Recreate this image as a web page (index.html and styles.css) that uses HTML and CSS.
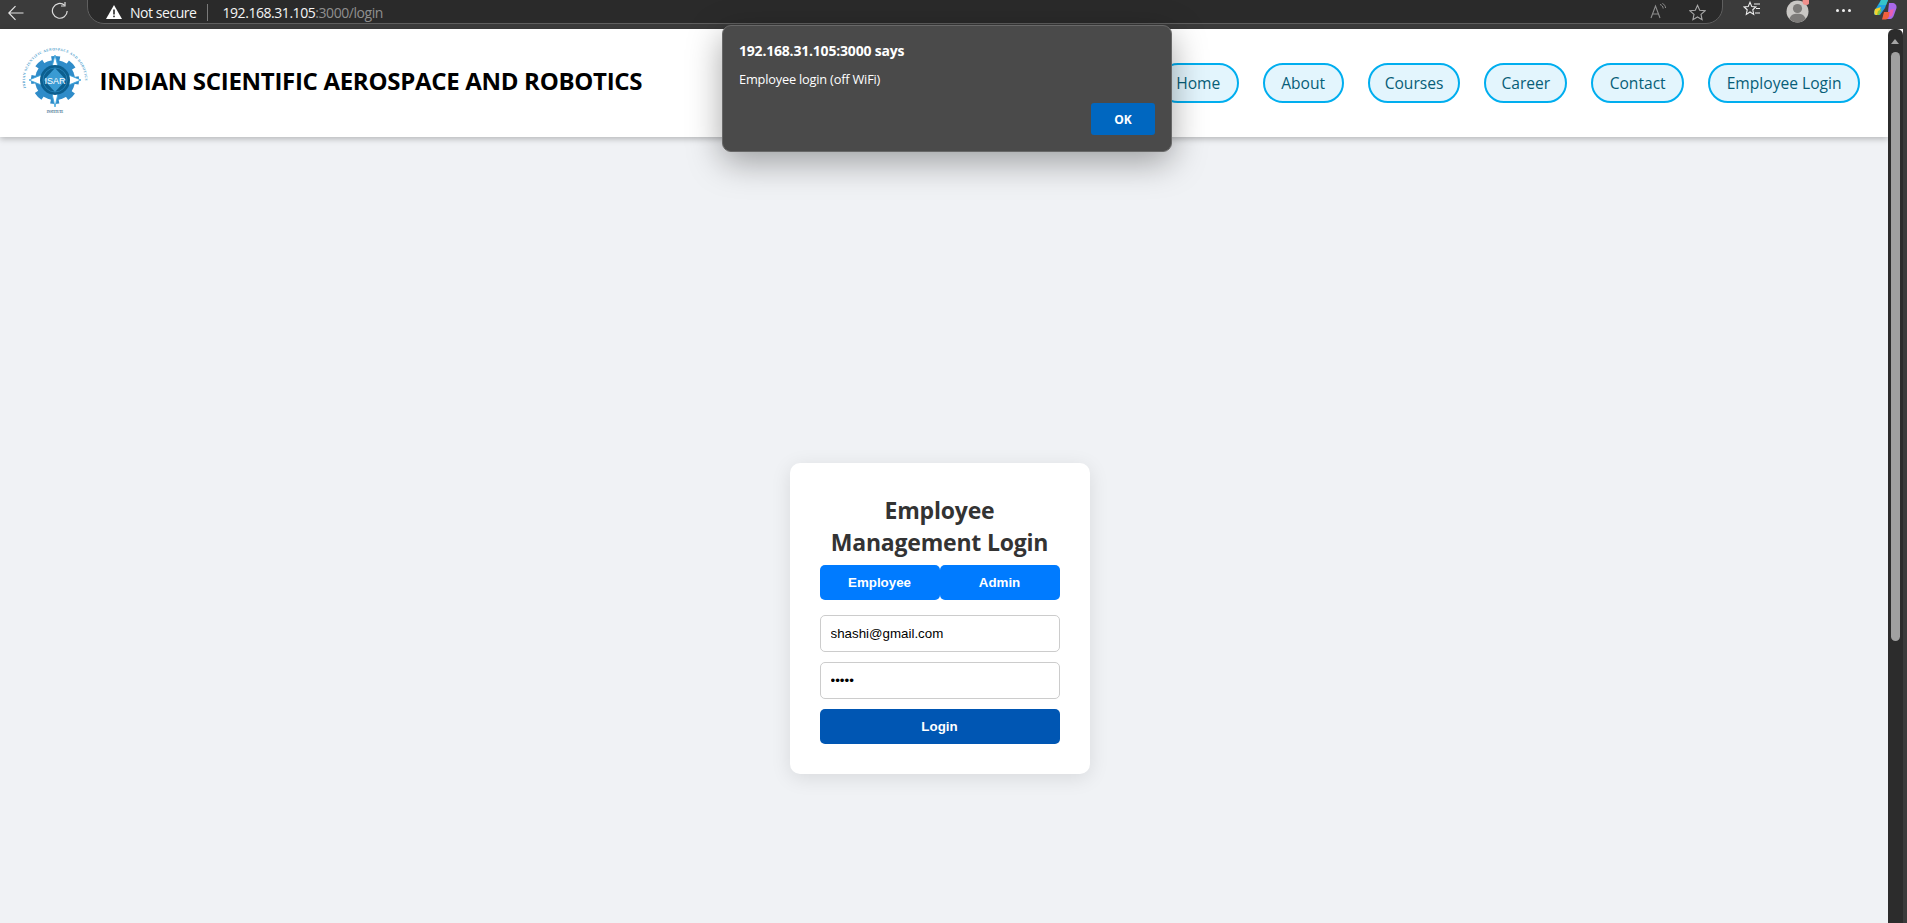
FILE: index.html
```html
<!DOCTYPE html>
<html lang="en">
<head>
<meta charset="utf-8">
<title>Employee Login</title>
<link rel="stylesheet" href="styles.css">
</head>
<body>
<div class="browser">
  <div class="toolbar">
    <svg class="tb-back" width="16" height="16" viewBox="0 0 16 16"><path d="M15.500 8H1M7.500 1.200 0.800 8l6.700 6.800" fill="none" stroke="#e4e4e4" stroke-width="1.200"/></svg>
    <svg class="tb-reload" width="18" height="18" viewBox="0 0 18 18"><path d="M13.600 3.200A7.400 7.400 0 1 0 16.200 9" fill="none" stroke="#dcdcdc" stroke-width="1.200"/><path d="M14 0v4h-4" fill="none" stroke="#dcdcdc" stroke-width="1.200"/></svg>
    <div class="omnibox">
      <svg class="warn" width="16" height="14" viewBox="0 0 16 14"><path d="M8 0 16 14H0Z" fill="#fff"/><rect x="7.200" y="4.500" width="1.600" height="5" fill="#2a2a2a"/><rect x="7.200" y="10.600" width="1.600" height="1.600" fill="#2a2a2a"/></svg>
      <span class="not-secure">Not secure</span>
      <span class="sep"></span>
      <span class="url">192.168.31.105<span class="url-dim">:3000/login</span></span>
      <span class="omni-spacer"></span>
      <svg class="read" width="17" height="17" viewBox="0 0 17 17"><path d="M1 15 5.500 3 10 15M2.600 11h5.800" fill="none" stroke="#8e8e8e" stroke-width="1.100"/><path d="M10 1.500c2 .6 3 2 3.200 4M12.400.4c1.900 1 3 2.600 3.200 4.600" fill="none" stroke="#8e8e8e" stroke-width="1"/></svg>
      <svg class="star" width="17" height="17" viewBox="0 0 17 17"><path d="M8.500 1.300 10.700 6.200l5.300.6-4 3.600 1.100 5.300-4.600-2.700-4.600 2.700 1.100-5.300-4-3.600 5.300-.6Z" fill="none" stroke="#a8a8a8" stroke-width="1.100"/></svg>
    </div>
    <svg class="tb-fav" width="18" height="18" viewBox="0 0 18 18"><path d="M7 1.300 8.800 5.600l4 .4-3 2.800.9 4.600L7 11l-3.700 2.400.9-4.600-3-2.800 4-.4Z" fill="none" stroke="#f0f0f0" stroke-width="1.100"/><path d="M11 3h6M13 7.500h4M12 12h5" stroke="#f0f0f0" stroke-width="1.100"/></svg>
    <div class="tb-avatar">
      <svg width="23" height="24" viewBox="0 0 23 24"><circle cx="11.500" cy="11.500" r="11" fill="#c9c7c4"/><circle cx="11.500" cy="8.500" r="4.600" fill="#7d7b79"/><path d="M3.500 19c1-4 4-5.200 8-5.200s7 1.200 8 5.200a11 11 0 0 1-16 0Z" fill="#7d7b79"/><circle cx="20" cy="1.500" r="3.500" fill="#f0908c"/></svg>
    </div>
    <span class="tb-dots"><i></i><i></i><i></i></span>
    <svg class="tb-copilot" width="23" height="20" viewBox="0 0 23 20"><path d="M7 0h7l-3 8-5 7H2C0 15-.5 13 .3 11Z" fill="#1f9fe0"/><path d="M7 0h7l-2 5H5Z" fill="#35c3c9"/><path d="M1 9 7 7 4 15H2C0 15 0 12 1 9Z" fill="#f2d22e"/><path d="M4 11 8 9 5 15H3Z" fill="#8cc63f"/><path d="M15 3h3c3 0 5 2 4.500 5L20 15c-.6 2-2 4-4 4h-5l3-7Z" fill="#a968e8"/><path d="M10 12h6l-1 4c-.5 2-2 3.500-3.500 3.500H8Z" fill="#f0603c"/><path d="M16 10l4-1-2 7-3 1Z" fill="#e85fb0"/></svg>
  </div>
  <div class="viewport">
    <div class="page">
      <header class="site-header">
        <svg class="logo" width="70" height="72" viewBox="0 0 70 72">
          <defs><path id="logo-arc" d="M4 41A30 30 0 1 1 62 41"/></defs>
          <text class="logo-arc-text"><textPath href="#logo-arc" textLength="102">INDIAN SCIENTIFIC AEROSPACE AND ROBOTICS</textPath></text>
          <circle class="logo-gear-teeth" cx="33" cy="33" r="21.500"/>
          <circle cx="33" cy="33" r="20" fill="#2f8cc9"/>
          <path d="M33 8 37 24 59 33 37 42 33 60 29 42 7 33 29 24Z" fill="#fff" stroke="#3fa7dc" stroke-width=".9"/>
          <circle cx="33" cy="33" r="15" fill="#0c5f8f"/>
          <circle cx="33" cy="33" r="12" fill="none" stroke="#2a86bd" stroke-width=".8"/>
          <path d="M33 21 44 33 33 45 22 33Z" fill="#3a9bd3"/>
          <text class="logo-isar" x="33" y="36.500">ISAR</text>
          <text class="logo-inst" x="33" y="66">INSTITUTE</text>
        </svg>
        <h1 class="site-title">INDIAN SCIENTIFIC AEROSPACE AND ROBOTICS</h1>
        <nav class="nav">
          <a class="pill">Home</a>
          <a class="pill">About</a>
          <a class="pill pill-tight">Courses</a>
          <a class="pill pill-tight">Career</a>
          <a class="pill">Contact</a>
          <a class="pill">Employee Login</a>
        </nav>
      </header>
      <main class="main">
        <section class="card">
          <h2 class="card-title">Employee Management Login</h2>
          <div class="tabs">
            <button class="tab">Employee</button>
            <button class="tab">Admin</button>
          </div>
          <input class="field" type="text" value="shashi@gmail.com">
          <input class="field" type="password" value="12345">
          <button class="submit">Login</button>
        </section>
      </main>
    </div>
    <div class="scrollbar">
      <span class="sb-arrow"></span>
      <span class="sb-thumb"></span>
    </div>
    <div class="edge"></div>
  </div>
  <div class="dialog">
    <p class="dlg-title">192.168.31.105:3000 says</p>
    <p class="dlg-msg">Employee login (off WiFi)</p>
    <div class="dlg-actions"><button class="dlg-ok">OK</button></div>
  </div>
</div>
</body>
</html>
```
FILE: styles.css
```css
* { box-sizing: border-box; }
html, body { margin: 0; height: 100%; overflow: hidden; }
body { font-family: "Open Sans", "Noto Sans", sans-serif; }

.browser { position: relative; display: flex; flex-direction: column; height: 923px; overflow: hidden; }

/* browser toolbar */
.toolbar { flex: 0 0 29px; display: flex; align-items: flex-start; background: #3b3b3b; color: #fff; }
.tb-back { margin: 5px 0 0 8px; flex: none; }
.tb-reload { margin: 2px 0 0 27px; flex: none; }
.omnibox {
  flex: none; width: 1636px; height: 36px; margin: -12px 0 0 18px; padding: 12px 0 0 18px;
  display: flex; align-items: center;
  background: #2a2a2a; border: 1px solid #5f5f5f; border-radius: 0 0 17px 17px / 0 0 17px 17px;
  font-size: 14px;
}
.warn { flex: none; }
.not-secure { margin-left: 8px; color: #f4f4f4; letter-spacing: -.45px; }
.sep { width: 1px; height: 17px; margin: 0 15px 0 10px; background: #7a7a7a; }
.url { color: #f4f4f4; letter-spacing: -.45px; }
.url-dim { color: #8f8f8f; }
.omni-spacer { flex: 1; }
.read { flex: none; margin-top: -1px; }
.star { flex: none; margin: 0 16px 0 22px; }
.tb-fav { margin: 1px 0 0 20px; flex: none; }
.tb-avatar { margin: 0 0 0 25px; height: 24px; flex: none; }
.tb-dots { display: flex; gap: 3px; margin: 9px 0 0 27px; flex: none; }
.tb-dots i { width: 3px; height: 3px; background: #f0f0f0; border-radius: 50%; }
.tb-copilot { margin: 0 0 0 23px; flex: none; }

/* viewport */
.viewport { flex: 1; display: flex; min-height: 0; }
.page { flex: 1; min-width: 0; background: #f0f2f5; display: flex; flex-direction: column; }
.scrollbar { flex: 0 0 15px; position: relative; background: #2c2c2c; border-radius: 6px 6px 0 0; }
.sb-arrow { position: absolute; left: 3px; top: 10px; border: 4.500px solid transparent; border-top: 0; border-bottom: 5px solid #a5a5a5; }
.sb-thumb { position: absolute; left: 3px; top: 23px; width: 9px; height: 589px; background: #a0a0a0; border-radius: 5px; }
.edge { flex: 0 0 4px; background: #3b3b3b; }

/* site header */
.site-header {
  flex: 0 0 108px; display: flex; align-items: center;
  padding: 0 28px 0 22px; background: #fff; box-shadow: 0 2px 6px rgba(0, 0, 0, .25);
  position: relative;
}
.logo { flex: none; }
.logo-gear-teeth { fill: none; stroke: #2f8cc9; stroke-width: 5; stroke-dasharray: 8.440 8.440; stroke-dashoffset: 4.200; }
.logo-arc-text { font: 700 3.600px "Liberation Serif", serif; fill: #4a9bcc; }
.logo-isar { font: 400 9px "Liberation Sans", sans-serif; fill: #fff; text-anchor: middle; }
.logo-inst { font: 700 3px "Liberation Serif", serif; fill: #27617f; text-anchor: middle; }
.site-title { margin: -4px 0 0 7.500px; font-size: 24px; line-height: 32px; font-weight: 700; color: #000; white-space: nowrap; letter-spacing: -.3px; }
.nav { margin-left: auto; display: flex; gap: 24px; }
.pill {
  height: 40px; padding: 0 16.500px; display: flex; align-items: center;
  border: 2px solid #00aeef; border-radius: 20px; background: #e3f5fd;
  color: #075e78; font-size: 15.600px; font-weight: 500; white-space: nowrap;
}
.pill-tight { padding: 0 15px; }

/* login card */
.main { flex: 1; min-height: 0; display: flex; justify-content: center; align-items: flex-start; padding: 326px 9px 0 0; }
.card { flex: none; width: 300px; height: 311px; padding: 31px 30px 30px; background: #fff; border-radius: 10px; box-shadow: 0 4px 20px rgba(0, 0, 0, .1); }
.card-title { margin: 0 0 7px; font-size: 23px; line-height: 32px; font-weight: 700; color: #333; text-align: center; letter-spacing: -.2px; }
.tabs { display: flex; margin-bottom: 15px; }
.tab, .submit {
  height: 35px; border: 0; border-radius: 5px; color: #fff; padding: 0;
  font: 700 13.333px "Liberation Sans", Arial, sans-serif;
}
.tab { flex: 1; background: #007bff; }
.field {
  display: block; width: 100%; height: 37px; margin-bottom: 10px; padding: 0 10px;
  border: 1px solid #ccc; border-radius: 5px; background: #fff; color: #000;
  font: 400 13.333px "Liberation Sans", Arial, sans-serif;
}
.submit { display: block; width: 100%; background: #0056b3; }

/* alert */
.dialog {
  position: absolute; left: 722px; top: 25px; width: 450px; height: 127px; padding: 16px 16px 0;
  background: #4a4a4a; border: 1px solid #686868; border-radius: 9px;
  box-shadow: 0 10px 34px rgba(0, 0, 0, .35); color: #fff;
}
.dlg-title { margin: 0; font-size: 14px; line-height: 18px; font-weight: 700; letter-spacing: -.2px; }
.dlg-msg { margin: 10px 0 0; font-size: 12.800px; line-height: 18px; letter-spacing: -.2px; }
.dlg-actions { display: flex; justify-content: flex-end; margin-top: 15px; }
.dlg-ok { width: 64px; height: 32px; border: 0; border-radius: 3px; background: #0067c0; color: #fff; font: 700 12px "Open Sans", sans-serif; }
```
